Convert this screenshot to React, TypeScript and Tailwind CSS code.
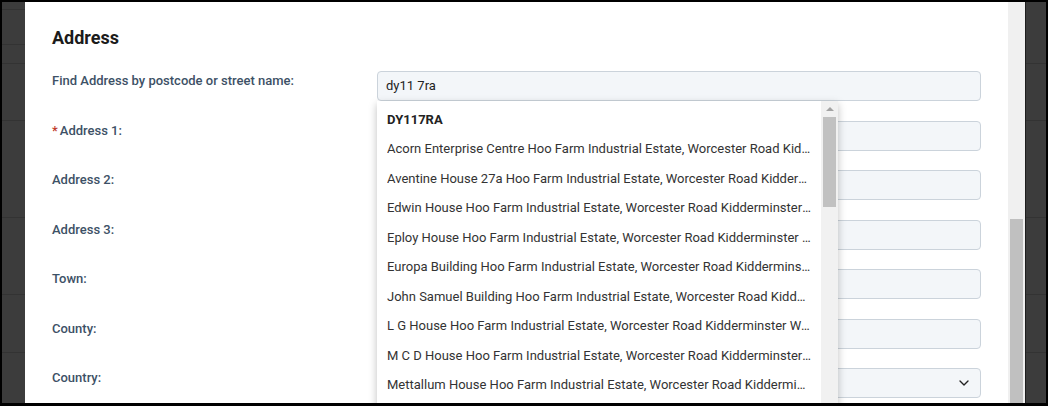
import { ChevronDown } from "lucide-react";

const fields = ["Address 1:", "Address 2:", "Address 3:", "Town:", "County:", "Country:"];

const suggestions = [
  "Acorn Enterprise Centre Hoo Farm Industrial Estate, Worcester Road Kidderminster Worcestershire",
  "Aventine House 27a Hoo Farm Industrial Estate, Worcester Road Kidderminster Worcestershire",
  "Edwin House Hoo Farm Industrial Estate, Worcester Road Kidderminster Worcestershire",
  "Eploy House Hoo Farm Industrial Estate, Worcester Road Kidderminster Worcestershire",
  "Europa Building Hoo Farm Industrial Estate, Worcester Road Kidderminster Worcestershire",
  "John Samuel Building Hoo Farm Industrial Estate, Worcester Road Kidderminster Worcestershire",
  "L G House Hoo Farm Industrial Estate, Worcester Road Kidderminster Worcestershire",
  "M C D House Hoo Farm Industrial Estate, Worcester Road Kidderminster Worcestershire",
  "Mettallum House Hoo Farm Industrial Estate, Worcester Road Kidderminster Worcestershire",
  "Orchard House Hoo Farm Industrial Estate, Worcester Road Kidderminster Worcestershire",
];

function SideStrip({ lines }: { lines: number[] }) {
  // dark strips either side, with the faint rows of the page behind
  return (
    <div className="flex flex-col w-full h-full bg-[#3c3c3c]">
      {lines.map((h, i) => (
        <div key={i} className="border-b border-[#333333] shrink-0" style={{ height: h }} />
      ))}
    </div>
  );
}

function Dropdown() {
  return (
    <div className="absolute left-0 top-[30px] w-[461px] h-[320px] bg-white shadow-[0_3px_8px_rgba(0,0,0,0.25)] flex z-10">
      <div className="flex-1 min-w-0 pt-[4px] pl-[10px] pr-[9px]">
        <div className="h-[29px] flex items-center text-[13px] font-bold text-[#222]">DY117RA</div>
        {suggestions.map((s) => (
          <div key={s} className="h-[29.5px] flex items-center text-[13px] text-[#333]">
            <span className="truncate">{s}</span>
          </div>
        ))}
      </div>
      <div className="w-[17px] bg-[#f1f1f1] flex flex-col items-center">
        <div className="h-[16px] flex items-center justify-center">
          <div className="w-0 h-0 border-l-[4px] border-r-[4px] border-b-[4px] border-l-transparent border-r-transparent border-b-[#a3a3a3]" />
        </div>
        <div className="w-[13px] h-[90px] bg-[#c1c1c1]" />
      </div>
    </div>
  );
}

export default function App() {
  return (
    <div className="w-[1048px] h-[406px] bg-black pt-[2px] pl-[2px] pr-[2px] pb-[3px] overflow-hidden font-['Roboto',sans-serif]">
      <div className="flex h-full">
        <div className="w-[23px] shrink-0 h-full">
          <SideStrip lines={[8, 35, 19, 57, 97, 77, 58, 60]} />
        </div>

        <div className="w-[983px] shrink-0 h-full bg-white overflow-hidden pl-[27px] pr-[27px] pt-[25px]">
          <h2 className="text-[18px] leading-[22px] font-bold text-[#1b1b1b]">Address</h2>

          <div className="mt-[22px] flex flex-col gap-[19.5px]">
            <div className="flex items-start">
              <label className="w-[325px] shrink-0 mt-[2px] leading-[16px] text-[13px] font-medium text-[#3d5166]">
                Find Address by postcode or street name:
              </label>
              <div className="relative flex-1">
                <div className="h-[30px] rounded-[4px] border border-[#cbd3db] bg-[#f3f6f9] px-[8px] flex items-center text-[13px] text-[#222]">
                  dy11 7ra
                </div>
                <Dropdown />
              </div>
            </div>

            {fields.map((f, i) => (
              <div key={f} className="flex items-start">
                <label className="w-[325px] shrink-0 mt-[2px] leading-[16px] text-[13px] font-medium text-[#3d5166]">
                  {i === 0 && <span className="text-[#c0392b] mr-[2px]">*</span>}
                  {f}
                </label>
                <div className="flex-1 h-[30px] rounded-[4px] border border-[#cbd3db] bg-[#f3f6f9] flex items-center justify-end pr-[8px]">
                  {f === "Country:" && <ChevronDown size={16} strokeWidth={2} className="text-[#222]" />}
                </div>
              </div>
            ))}
          </div>
        </div>

        <div className="w-[17px] shrink-0 h-full bg-[#f0f0f0] flex flex-col items-center">
          <div className="h-[217px] shrink-0" />
          <div className="w-[13px] flex-1 bg-[#c0c0c0]" />
        </div>
        <div className="w-[1px] shrink-0 h-full bg-[#1e1e1e]" />
        <div className="w-[20px] shrink-0 h-full">
          <SideStrip lines={[62, 57, 97, 77, 58, 60]} />
        </div>
      </div>
    </div>
  );
}
